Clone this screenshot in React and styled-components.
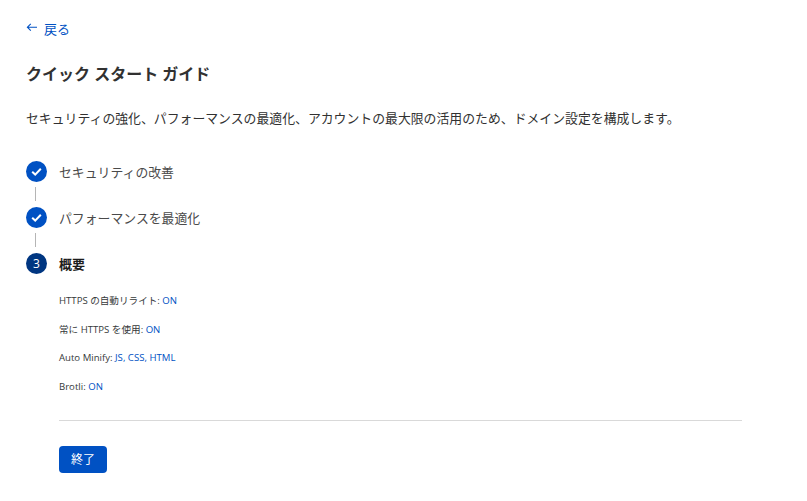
import React from 'react'
import styled, { createGlobalStyle } from 'styled-components'

const Global = createGlobalStyle`
  html, body {
    margin: 0;
    background: #fff;
    color: #313131;
    font-family: "Open Sans", "Noto Sans CJK JP", sans-serif;
  }
`

const Page = styled.div`
  width: 807px;
  height: 501px;
  box-sizing: border-box;
  padding: 19px 65px 0 26px;
  overflow: hidden;
`
const BackLink = styled.a`
  display: flex;
  align-items: center;
  gap: 7px;
  height: 18px;
  font-size: 13px;
  color: #0051c3;
  text-decoration: none;
`
const Title = styled.h1`
  margin: 27px 0 0;
  font-size: 16px;
  line-height: 20px;
  font-weight: 700;
  color: #313131;
`
const Intro = styled.p`
  margin: 24px 0 0;
  font-size: 12.86px;
  line-height: 20px;
`
const Steps = styled.div`
  margin-top: 32px;
`
const Step = styled.div`
  display: flex;
  align-items: center;
  gap: 12px;
  height: 22px;
`
const Badge = styled.span`
  flex: none;
  width: 21px;
  height: 21px;
  border-radius: 50%;
  display: flex;
  align-items: center;
  justify-content: center;
  color: #fff;
  font-size: 12px;
  background: ${p => (p.$active ? '#003681' : '#0051c3')};
`
const StepLabel = styled.span`
  padding-top: 2px;
  line-height: 20px;
  font-weight: ${p => (p.$active ? 700 : 400)};
  color: ${p => (p.$active ? '#1d1d1d' : '#4a4a4a')};
  font-size: ${p => (p.$active ? '13px' : '12.86px')};
`
const Connector = styled.div`
  width: 1px;
  height: 14px;
  margin: 5px 0 5px 9px;
  background: #b5b5b5;
`
const Details = styled.div`
  margin: 20px 0 0 33px;
`
const Setting = styled.div`
  height: 28.7px;
  font-size: 9.6px;
  line-height: 14px;
  color: #36393a;
`
const Value = styled.span`
  color: #0051c3;
`
const Divider = styled.hr`
  border: none;
  height: 1px;
  margin: 11.2px 0 0;
  background: #d9d9d9;
`
const DoneButton = styled.button`
  display: block;
  margin-top: 25px;
  width: 48px;
  height: 27px;
  padding: 0;
  border: none;
  border-radius: 4px;
  background: #0051c3;
  color: #fff;
  font-family: inherit;
  font-size: 12px;
`

const Check = () => (
  <svg width="13" height="13" viewBox="0 0 13 13" fill="none">
    <path d="M2.2 6.8 5.2 9.6 10.8 3.8" stroke="#fff" strokeWidth="2" />
  </svg>
)

const settings = [
  ['HTTPS の自動リライト: ', 'ON'],
  ['常に HTTPS を使用: ', 'ON'],
  ['Auto Minify: ', 'JS, CSS, HTML'],
  ['Brotli: ', 'ON'],
]

export default function App() {
  return (
    <Page>
      <Global />
      <BackLink href="#">
        <svg width="11" height="11" viewBox="0 0 11 11" fill="none" stroke="#0051c3" strokeWidth="1.1">
          <path d="M1.4 4.2H11M4.8 0.8 1.4 4.2 4.8 7.6" />
        </svg>
        戻る
      </BackLink>
      <Title>クイック スタート ガイド</Title>
      <Intro>セキュリティの強化、パフォーマンスの最適化、アカウントの最大限の活用のため、ドメイン設定を構成します。</Intro>
      <Steps>
        <Step>
          <Badge><Check /></Badge>
          <StepLabel>セキュリティの改善</StepLabel>
        </Step>
        <Connector />
        <Step>
          <Badge><Check /></Badge>
          <StepLabel>パフォーマンスを最適化</StepLabel>
        </Step>
        <Connector />
        <Step>
          <Badge $active>3</Badge>
          <StepLabel $active>概要</StepLabel>
        </Step>
      </Steps>
      <Details>
        {settings.map(([label, value]) => (
          <Setting key={label}>{label}<Value>{value}</Value></Setting>
        ))}
        <Divider />
        <DoneButton>終了</DoneButton>
      </Details>
    </Page>
  )
}
